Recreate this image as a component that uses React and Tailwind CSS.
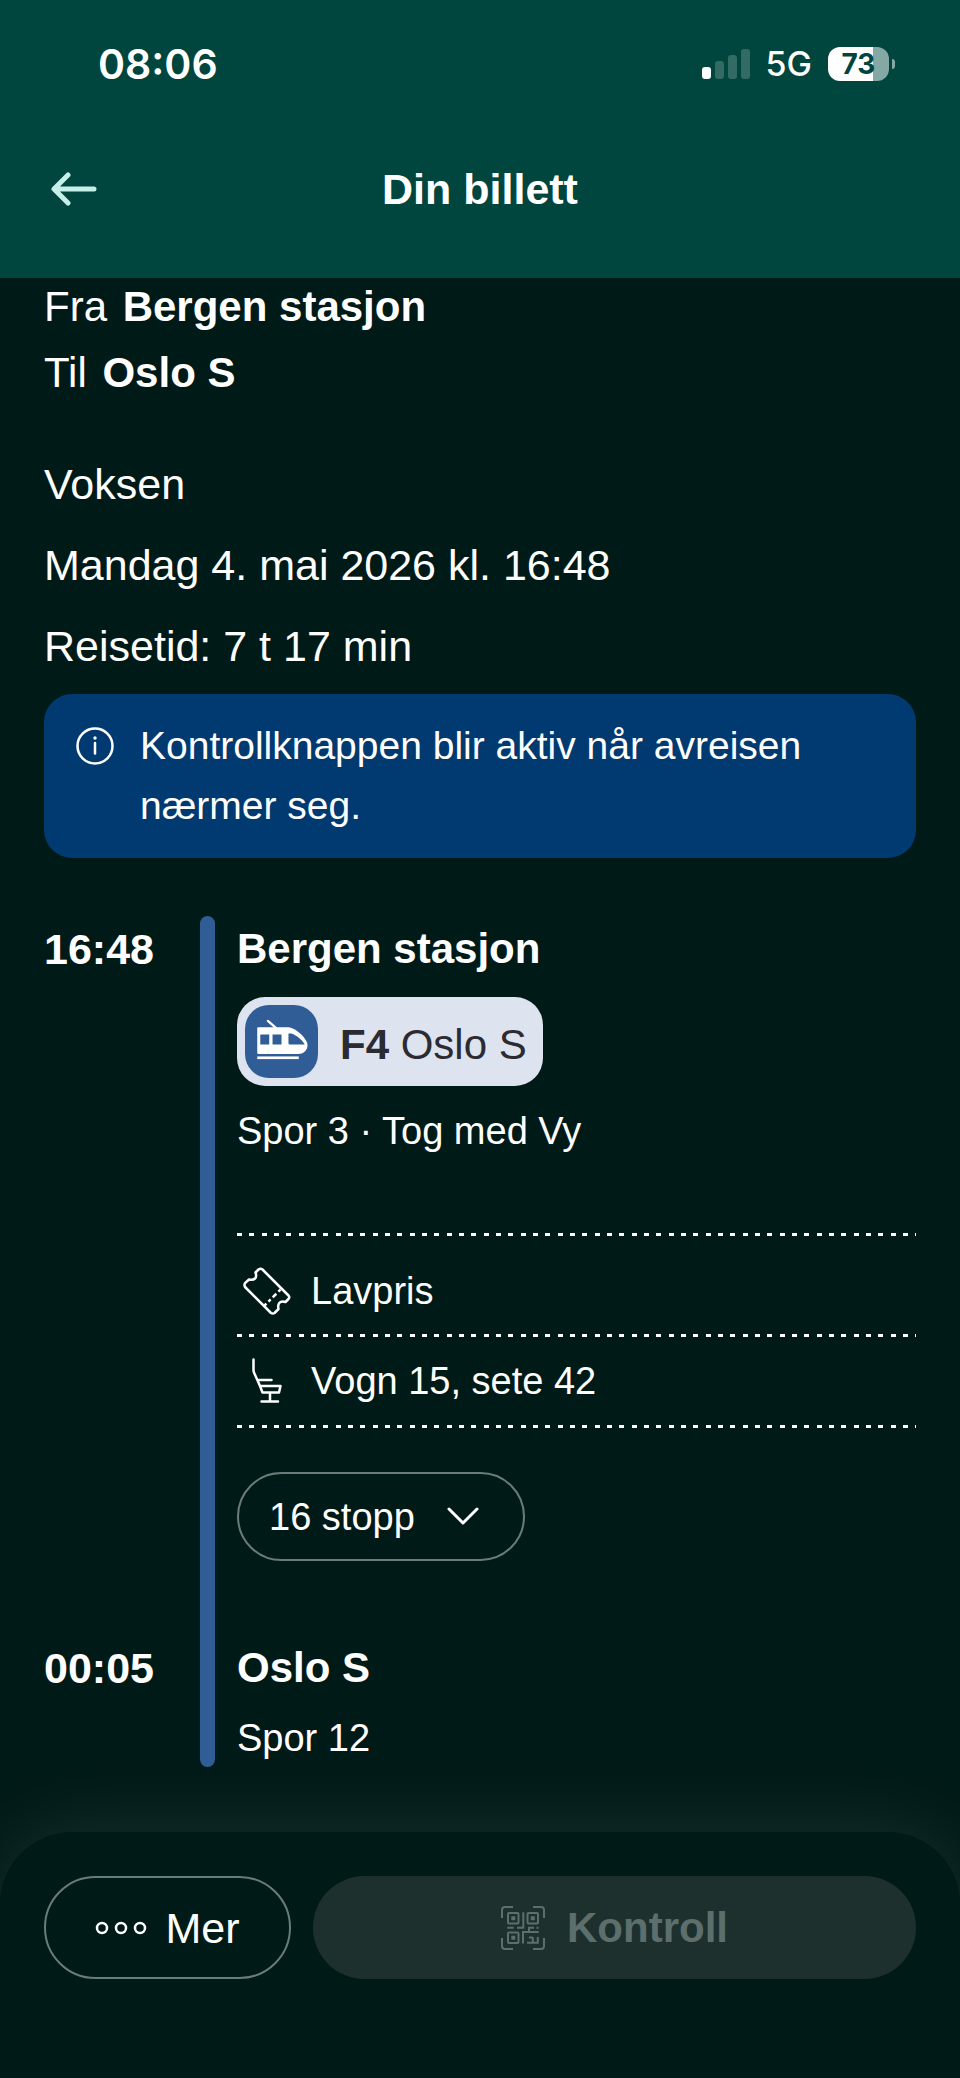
import { useState } from 'react'

const BARS = [
  { height: 'h-3', color: 'bg-white' },
  { height: 'h-[18px]', color: 'bg-white/20' },
  { height: 'h-6', color: 'bg-white/20' },
  { height: 'h-[30px]', color: 'bg-white/20' },
]

function StatusBar() {
  return (
    <div className="h-32 pl-[98px] pr-[65px] flex items-center justify-between font-['Inter',sans-serif]">
      <span className="text-[41px] leading-none font-semibold">08:06</span>
      <div className="flex items-center">
        <div className="flex items-end gap-1 h-[30px]">
          {BARS.map((bar, i) => (
            <span key={i} className={`w-[9px] rounded-[3px] ${bar.height} ${bar.color}`} />
          ))}
        </div>
        <span className="ml-4 text-[34px] leading-none font-medium">5G</span>
        <div className="ml-4 flex items-center gap-[3px]">
          <div className="w-[61px] h-[34px] rounded-xl overflow-hidden flex items-center justify-center bg-[linear-gradient(90deg,white_74%,#84a8a4_74%)]">
            <span className="text-[28px] leading-none font-bold text-[#00453e]">73</span>
          </div>
          <span className="w-[3px] h-2.5 rounded-r-full bg-[#84a8a4]" />
        </div>
      </div>
    </div>
  )
}

function BackIcon() {
  return (
    <svg width="46" height="34" viewBox="0 0 46 34" fill="none" stroke="currentColor" strokeWidth="5" strokeLinecap="round" strokeLinejoin="round">
      <path d="M43 17H4M17 3L3 17L17 31" />
    </svg>
  )
}

function InfoIcon() {
  return (
    <svg className="shrink-0" width="38" height="38" viewBox="0 0 38 38" fill="none" stroke="currentColor" strokeWidth="2.5" strokeLinecap="round">
      <circle cx="19" cy="19" r="17.5" />
      <path d="M19 16V26.5" />
      <circle cx="19" cy="11" r="1.7" fill="currentColor" stroke="none" />
    </svg>
  )
}

function TrainIcon() {
  return (
    <svg width="73" height="73" viewBox="28 13 220 220">
      <path d="M97 61L121 82" stroke="white" strokeWidth="7" strokeLinecap="round" />
      <path d="M68 80H160C182 84 206 106 215 126C221 144 207 161 188 161H68Q65 161 65 158V83Q65 80 68 80Z" fill="white" />
      <path d="M74 102H101V132H74ZM111 102H138V132H111ZM159 99H168C184 105 200 118 208 132H163Q159 132 159 128Z" fill="#315d96" />
      <rect x="65" y="168" width="125" height="8" fill="white" />
    </svg>
  )
}

function TicketIcon() {
  return (
    <svg width="48" height="48" viewBox="0 0 48 48" fill="none" stroke="currentColor" strokeWidth="2.5" strokeLinejoin="round">
      <path d="M15.5 2.5Q17.5 1 19.5 2.5L45.5 28.5Q47 30.3 45.5 32L42.5 35Q38.5 33.5 36.5 35.8Q34.5 38 35.5 42L31.5 46Q29.7 47 28 46L2 20Q1 18 2 16.2L6 12.5Q10 13.5 12 11.5Q14 9.5 12.5 5.5Z" />
      <path d="M37.5 22.5L21.5 38.5" strokeDasharray="3 3 5 3" />
    </svg>
  )
}

function SeatIcon() {
  return (
    <svg width="30" height="46" viewBox="0 0 30 46" fill="none" stroke="currentColor" strokeWidth="2.5" strokeLinecap="round" strokeLinejoin="round">
      <path d="M1.5 1.5V12Q1.5 13.5 2.2 15L8 28L10.5 34.5H27L28.5 28H8M7 22H19.5M18 34.5V43.5M9.5 43.5H26" />
    </svg>
  )
}

function ChevronIcon() {
  return (
    <svg width="32" height="20" viewBox="0 0 32 20" fill="none" stroke="currentColor" strokeWidth="3" strokeLinecap="round" strokeLinejoin="round">
      <path d="M2 2L16 16L30 2" />
    </svg>
  )
}

function DotsIcon() {
  return (
    <svg width="52" height="14" viewBox="0 0 52 14" fill="none" stroke="currentColor" strokeWidth="2.5">
      <circle cx="7" cy="7" r="5" />
      <circle cx="26" cy="7" r="5" />
      <circle cx="45" cy="7" r="5" />
    </svg>
  )
}

function QrIcon() {
  return (
    <svg width="44" height="44" viewBox="0 0 44 44" fill="none" stroke="currentColor" strokeWidth="2">
      <path d="M1 12V4Q1 1 4 1H12M32 1H40Q43 1 43 4V12M43 32V40Q43 43 40 43H32M12 43H4Q1 43 1 40V32" />
      <rect x="7" y="7" width="10.5" height="10.5" rx="1" />
      <rect x="26.5" y="7" width="10.5" height="10.5" rx="1" />
      <rect x="7" y="26.5" width="10.5" height="10.5" rx="1" />
      <path d="M10.3 10.3h4v4h-4zM29.8 10.3h4v4h-4zM10.3 29.8h4v4h-4z" fill="currentColor" stroke="none" />
      <path d="M22.3 6.3V21.7H16M6.3 21.7H12.7M28 26V21.7H33M35.5 21.7H37.5M22 37.5V26H37.7M26 36.7H37.7M36.8 31V36.7M31.8 31V36.7M28 31.5H31.8" />
    </svg>
  )
}

function DottedLine() {
  return (
    <div className="h-[3px] bg-[repeating-linear-gradient(90deg,white_0_5px,transparent_5px_12px,white_12px_17px,transparent_17px_25px,white_25px_30px,transparent_30px_37px)]" />
  )
}

export default function App() {
  const [open, setOpen] = useState(false)

  return (
    <div className="min-h-screen flex flex-col bg-[#001a17] text-white text-[43px] leading-[58px] font-['Liberation_Sans',Arial,sans-serif]">
      <header className="bg-[#00453e] pb-7">
        <StatusBar />
        <div className="h-[122px] px-[51px] grid grid-cols-[1fr_auto_1fr] items-center">
          <button aria-label="Tilbake" className="justify-self-start text-[#c5efe8]">
            <BackIcon />
          </button>
          <h1 className="font-bold">Din billett</h1>
        </div>
      </header>

      <main className="px-11 pb-16">
        <div className="flex flex-col gap-2 text-[42px]">
          <p>Fra <strong className="ml-1">Bergen stasjon</strong></p>
          <p>Til <strong className="ml-1">Oslo S</strong></p>
        </div>

        <div className="mt-[53px] flex flex-col gap-[23px]">
          <p>Voksen</p>
          <p>Mandag 4. mai 2026 kl. 16:48</p>
          <p>Reisetid: 7 t 17 min</p>
        </div>

        <div role="status" className="mt-[19px] rounded-[28px] bg-[#003a70] px-8 py-[22px] flex gap-[26px] text-[39px] leading-[60px]">
          <span className="h-[60px] flex items-center"><InfoIcon /></span>
          <p>Kontrollknappen blir aktiv når avreisen nærmer seg.</p>
        </div>

        <section className="mt-[58px] grid grid-cols-[156px_15px_1fr]">
          <time className="pt-1 font-bold">16:48</time>
          <div className="row-span-2 rounded-full bg-[#315d96]" />
          <div className="pt-1 pl-[22px]">
            <h2 className="font-bold text-[42px]">Bergen stasjon</h2>
            <div className="mt-[19px] w-fit rounded-[28px] bg-[#dde3ef] p-2 pr-4 flex items-center gap-[22px] text-[42px] text-[#2b2b33]">
              <span className="rounded-3xl bg-[#315d96]"><TrainIcon /></span>
              <span className="pt-1.5"><strong>F4</strong> Oslo S</span>
            </div>
            <p className="mt-5 text-[38px] leading-[50px]">Spor 3 · Tog med Vy</p>

            <div className="mt-[77px] text-[38px] leading-[50px]">
              <DottedLine />
              <div className="pt-3 h-[98px] pl-1.5 flex items-center gap-5">
                <TicketIcon />
                <span>Lavpris</span>
              </div>
              <DottedLine />
              <div className="h-[88px] pl-1.5 flex items-center gap-5">
                <span className="w-12 flex justify-center"><SeatIcon /></span>
                <span>Vogn 15, sete 42</span>
              </div>
              <DottedLine />
            </div>

            <button
              onClick={() => setOpen(!open)}
              aria-expanded={open}
              className="mt-11 h-[89px] pl-[30px] pr-11 rounded-full border-2 border-[#6a7c78] flex items-center gap-8 text-[38px] leading-[50px]"
            >
              16 stopp
              <ChevronIcon />
            </button>
          </div>

          <time className="mt-[78px] font-bold">00:05</time>
          <div className="mt-[78px] pl-[22px] pb-1">
            <h2 className="font-bold text-[42px]">Oslo S</h2>
            <p className="mt-4 text-[38px] leading-[50px]">Spor 12</p>
          </div>
        </section>
      </main>

      <footer className="mt-auto rounded-t-[72px] bg-[#001a17] px-11 pt-11 pb-[99px] flex gap-[22px] shadow-[0_0_80px_rgba(255,255,255,0.1)]">
        <button className="h-[103px] w-[247px] rounded-full border-2 border-[#6a7c78] flex items-center justify-center gap-[18px]">
          <DotsIcon />
          Mer
        </button>
        <button disabled className="h-[103px] flex-1 rounded-full bg-[#1e302e] text-[#5c6f6d] text-[42px] font-bold flex items-center justify-center gap-[22px]">
          <QrIcon />
          Kontroll
        </button>
      </footer>
    </div>
  )
}
